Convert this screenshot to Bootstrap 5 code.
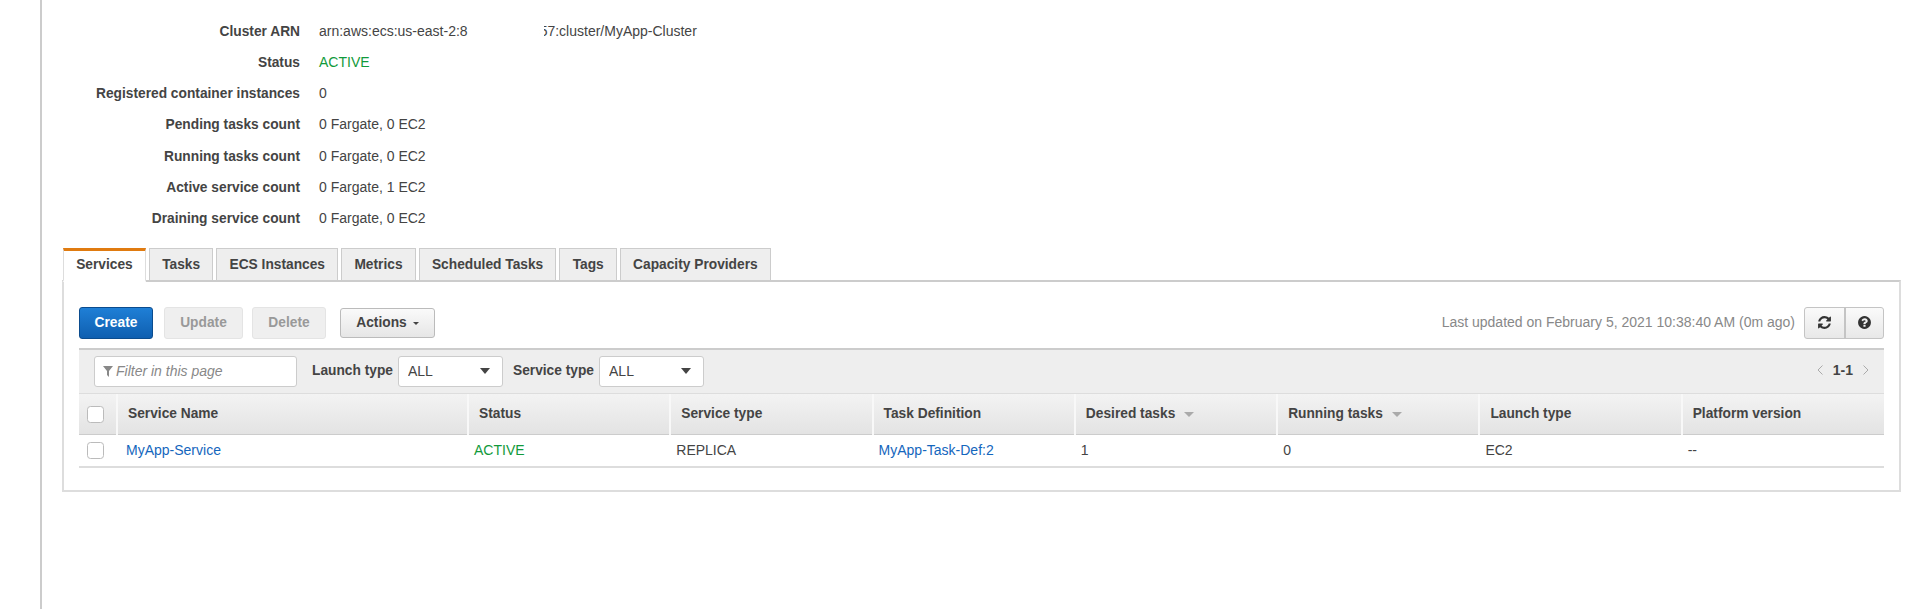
<!DOCTYPE html>
<html lang="en">

<head>
    <meta charset="UTF-8">
    <meta name="viewport" content="width=device-width, initial-scale=1.0">
    <title>Cluster : MyApp-Cluster</title>
    <link href="https://cdn.jsdelivr.net/npm/bootstrap@5.3.0/dist/css/bootstrap.min.css" rel="stylesheet">
    <style>
        body {
            font-family: "Liberation Sans", Arial, sans-serif;
            font-size: 14px;
            color: #444;
            background-color: #fff;
            overflow: hidden;
        }

        .page-wrap {
            margin-left: 40px;
            border-left: 2px solid #ccc;
            height: 609px;
            padding: 15.5px 19px 0 20px;
        }

        /* cluster details */
        .detail-row {
            height: 31.25px;
            line-height: 31.25px;
        }

        .detail-label {
            width: 238px;
            margin-right: 19px;
            text-align: right;
            font-weight: 700;
            font-size: 13.75px;
        }

        .arn-gap {
            display: inline-block;
            width: 72px;
        }

        /* the whited-out part of the ARN also covers half of this digit */
        .arn-cut {
            position: relative;
        }

        .arn-cut::before {
            content: "";
            position: absolute;
            left: 0;
            top: 0;
            bottom: 0;
            width: 4.8px;
            background: #fff;
        }

        .status-active {
            color: #119a3b;
        }

        /* tabs */
        .aws-tabs {
            margin: 13.5px 0 0 1px;
            border-bottom: 0;
            gap: 3px;
            position: relative;
            z-index: 1;
        }

        .aws-tabs .nav-link {
            height: 34px;
            padding: 6px 12.2px 0;
            font-size: 13.75px;
            font-weight: 700;
            color: #444;
            background: #eee;
            border: 1px solid #ccc;
            border-bottom: 2px solid #ccc;
            border-radius: 0;
            margin: 0;
        }

        .aws-tabs .nav-link.active {
            color: #444;
            background: #fff;
            border-color: #ddd;
            border-top: 3px solid #e07b10;
            border-bottom: 2px solid #fff;
            padding-top: 4px;
        }

        .aws-panel {
            margin-top: -2px;
            border: 2px solid #ddd;
            border-top-color: #ccc;
            padding: 25px 15px 22px;
        }

        /* action buttons */
        .aws-btn {
            height: 32px;
            padding: 0;
            font-size: 13.75px;
            font-weight: 700;
            border-radius: 3px;
            line-height: 1;
        }

        .btn-create {
            width: 74px;
            margin-right: 11px;
            color: #fff;
            background: linear-gradient(#1f7fd6, #0f5fb0);
            border: 1px solid #0b4c8e;
        }

        .btn-off {
            color: #999;
            background: #efefef;
            border: 1px solid #e4e4e4;
            margin-right: 9px;
        }

        .btn-update {
            width: 79px;
        }

        .btn-delete {
            width: 74px;
        }

        .btn-actions {
            height: 30px;
            width: 95px;
            margin-left: 5px;
            margin-top: 1px;
            padding-top: 1px;
            color: #444;
            background: linear-gradient(#fafafa, #e6e6e6);
            border: 1px solid #bbb;
        }

        .mini-caret {
            display: inline-block;
            margin-left: 6px;
            vertical-align: 2px;
            border-left: 3px solid transparent;
            border-right: 3px solid transparent;
            border-top: 3px solid #444;
        }

        .last-updated {
            color: #888;
            margin-right: 9px;
        }

        .icon-group {
            height: 32px;
            border: 1px solid #c4c4c4;
            border-radius: 3px;
            background: linear-gradient(#fafafa, #e8e8e8);
        }

        .icon-btn {
            width: 39px;
            display: flex;
            align-items: center;
            justify-content: center;
        }

        .icon-btn + .icon-btn {
            border-left: 2px solid #c4c4c4;
        }

        .icon-btn svg {
            width: 15px;
            height: 15px;
            fill: #333;
        }

        /* filter bar */
        .filter-bar {
            height: 46px;
            margin-top: 9px;
            padding: 6px 15px 0 15px;
            background: #eee;
            border-top: 2px solid #ccc;
            border-bottom: 1px solid #ddd;
        }

        .filter-box {
            width: 203px;
            height: 31px;
            margin-right: 15px;
            padding-left: 8px;
            background: #fff;
            border: 1px solid #ccc;
            border-radius: 3px;
            color: #888;
            font-style: italic;
        }

        .filter-box svg {
            width: 10px;
            height: 11px;
            margin-right: 3px;
            fill: #888;
        }

        .filter-label {
            font-size: 13.75px;
            font-weight: 700;
            margin: 5px 5px 0 0;
        }

        .aws-select {
            width: 105px;
            height: 31px;
            margin-right: 10px;
            padding: 0 0 0 9px;
            font-size: 14px;
            color: #444;
            border: 1px solid #ccc;
            border-radius: 3px;
            background-size: 10px 6px;
            background-position: right 12px top 11px;
            background-image: url("data:image/svg+xml,%3Csvg xmlns='http://www.w3.org/2000/svg' viewBox='0 0 10 6'%3E%3Cpath d='M0 0h10L5 6z' fill='%23444'/%3E%3C/svg%3E");
        }

        .pager {
            gap: 10px;
            margin-top: 4px;
        }

        .pager svg {
            width: 6px;
            height: 10px;
            fill: none;
            stroke: #aaa;
            stroke-width: 1;
        }

        /* services table */
        .aws-table {
            table-layout: fixed;
            margin: 0;
            font-size: 14px;
            color: #444;
            border-color: #ccc;
        }

        .aws-table .col-check {
            width: 38px;
        }

        .aws-table .col-name {
            width: 351px;
        }

        .aws-table th {
            height: 41px;
            padding: 0 10px;
            vertical-align: middle;
            font-size: 13.75px;
            font-weight: 700;
            color: #444;
            background: linear-gradient(#f3f3f3, #e3e3e3);
            border-left: 2px solid #f8f8f8;
            border-bottom: 1px solid #ccc;
        }

        .aws-table th:first-child {
            border-left: 0;
        }

        .aws-table td {
            height: 32px;
            padding: 0 6px;
            vertical-align: middle;
            color: #444;
            border-bottom: 2px solid #ddd;
        }

        .aws-table .check-cell {
            padding: 0 0 0 8px;
        }

        .aws-table .name-cell {
            padding-left: 9px;
        }

        .aws-table a {
            color: #1466bd;
            text-decoration: none;
        }

        .aws-table td .status-active {
            color: #119a3b;
        }

        .aws-check {
            display: block;
            width: 17px;
            height: 17px;
            margin: 0;
            border: 1px solid #bbb;
            border-radius: 3px;
        }

        .sort-caret {
            display: inline-block;
            margin-left: 9px;
            vertical-align: 1px;
            border-left: 5px solid transparent;
            border-right: 5px solid transparent;
            border-top: 5px solid #aaa;
        }
    </style>
</head>

<body>

    <div class="page-wrap">

        <!-- Cluster details -->
        <div class="d-flex detail-row">
            <div class="detail-label">Cluster ARN</div>
            <div>arn:aws:ecs:us-east-2:8<span class="arn-gap"></span><span class="arn-cut">5</span>7:cluster/MyApp-Cluster</div>
        </div>
        <div class="d-flex detail-row">
            <div class="detail-label">Status</div>
            <div class="status-active">ACTIVE</div>
        </div>
        <div class="d-flex detail-row">
            <div class="detail-label">Registered container instances</div>
            <div>0</div>
        </div>
        <div class="d-flex detail-row">
            <div class="detail-label">Pending tasks count</div>
            <div>0 Fargate, 0 EC2</div>
        </div>
        <div class="d-flex detail-row">
            <div class="detail-label">Running tasks count</div>
            <div>0 Fargate, 0 EC2</div>
        </div>
        <div class="d-flex detail-row">
            <div class="detail-label">Active service count</div>
            <div>0 Fargate, 1 EC2</div>
        </div>
        <div class="d-flex detail-row">
            <div class="detail-label">Draining service count</div>
            <div>0 Fargate, 0 EC2</div>
        </div>

        <!-- Tabs -->
        <ul class="nav nav-tabs aws-tabs">
            <li class="nav-item"><a class="nav-link active" href="#">Services</a></li>
            <li class="nav-item"><a class="nav-link" href="#">Tasks</a></li>
            <li class="nav-item"><a class="nav-link" href="#">ECS Instances</a></li>
            <li class="nav-item"><a class="nav-link" href="#">Metrics</a></li>
            <li class="nav-item"><a class="nav-link" href="#">Scheduled Tasks</a></li>
            <li class="nav-item"><a class="nav-link" href="#">Tags</a></li>
            <li class="nav-item"><a class="nav-link" href="#">Capacity Providers</a></li>
        </ul>

        <div class="aws-panel">

            <!-- Action buttons -->
            <div class="d-flex align-items-start">
                <button type="button" class="btn aws-btn btn-create">Create</button>
                <button type="button" class="btn aws-btn btn-off btn-update">Update</button>
                <button type="button" class="btn aws-btn btn-off btn-delete">Delete</button>
                <button type="button" class="btn aws-btn btn-actions">Actions<span class="mini-caret"></span></button>
                <div class="ms-auto d-flex align-items-center">
                    <span class="last-updated">Last updated on February 5, 2021 10:38:40 AM (0m ago)</span>
                    <div class="d-flex icon-group">
                        <div class="icon-btn">
                            <svg viewBox="0 0 1792 1792"><path d="M1639 1056q0 5-1 7-64 268-268 434.5t-478 166.5q-146 0-282.5-55t-243.5-157l-129 129q-19 19-45 19t-45-19-19-45v-448q0-26 19-45t45-19h448q26 0 45 19t19 45-19 45l-137 137q71 66 161 102t187 36q134 0 250-65t186-179q11-17 53-117 8-23 30-23h192q13 0 22.5 9.5t9.5 22.5zm25-800v448q0 26-19 45t-45 19h-448q-26 0-45-19t-19-45 19-45l138-138q-148-137-349-137-134 0-250 65t-186 179q-11 17-53 117-8 23-30 23h-199q-13 0-22.5-9.5t-9.5-22.5v-7q65-268 270-434.5t480-166.5q146 0 284 55.5t245 156.5l130-129q19-19 45-19t45 19 19 45z"/></svg>
                        </div>
                        <div class="icon-btn">
                            <svg viewBox="0 0 1792 1792"><path d="M1024 1376v-192q0-14-9-23t-23-9h-192q-14 0-23 9t-9 23v192q0 14 9 23t23 9h192q14 0 23-9t9-23zm256-672q0-88-55.5-163t-138.5-116-170-41q-243 0-371 213-15 24 8 42l132 100q7 6 19 6 16 0 25-12 53-68 86-92 34-24 86-24 48 0 85.5 26t37.5 59q0 38-20 61t-68 45q-63 28-115.5 86.5t-52.5 125.5v36q0 14 9 23t23 9h192q14 0 23-9t9-23q0-19 21.5-49.5t54.5-49.5q32-18 49-28.5t46-35 44.5-48 28-60.5 12.5-81zm384 192q0 209-103 385.5t-279.5 279.5-385.5 103-385.5-103-279.5-279.5-103-385.5 103-385.5 279.5-279.5 385.5-103 385.5 103 279.5 279.5 103 385.5z"/></svg>
                        </div>
                    </div>
                </div>
            </div>

            <!-- Filter bar -->
            <div class="d-flex align-items-start filter-bar">
                <div class="d-flex align-items-center filter-box">
                    <svg viewBox="0 0 10 11"><path d="M0 0h10L6 5v6L4 9V5z"/></svg>
                    <span>Filter in this page</span>
                </div>
                <span class="filter-label">Launch type</span>
                <select class="form-select aws-select"><option>ALL</option></select>
                <span class="filter-label">Service type</span>
                <select class="form-select aws-select"><option>ALL</option></select>
                <div class="ms-auto d-flex align-items-center pager">
                    <svg viewBox="0 0 6 10"><path d="M5.5 .5L1 5l4.5 4.5"/></svg>
                    <strong>1-1</strong>
                    <svg viewBox="0 0 6 10"><path d="M.5 .5L5 5 .5 9.5"/></svg>
                </div>
            </div>

            <!-- Services table -->
            <table class="table aws-table">
                <colgroup>
                    <col class="col-check">
                    <col class="col-name">
                    <col><col><col><col><col><col>
                </colgroup>
                <thead>
                    <tr>
                        <th class="check-cell"><input class="form-check-input aws-check" type="checkbox"></th>
                        <th>Service Name</th>
                        <th>Status</th>
                        <th>Service type</th>
                        <th>Task Definition</th>
                        <th>Desired tasks<span class="sort-caret"></span></th>
                        <th>Running tasks<span class="sort-caret"></span></th>
                        <th>Launch type</th>
                        <th>Platform version</th>
                    </tr>
                </thead>
                <tbody>
                    <tr>
                        <td class="check-cell"><input class="form-check-input aws-check" type="checkbox"></td>
                        <td class="name-cell"><a href="#">MyApp-Service</a></td>
                        <td><span class="status-active">ACTIVE</span></td>
                        <td>REPLICA</td>
                        <td><a href="#">MyApp-Task-Def:2</a></td>
                        <td>1</td>
                        <td>0</td>
                        <td>EC2</td>
                        <td>--</td>
                    </tr>
                </tbody>
            </table>

        </div>
    </div>

</body>

</html>
